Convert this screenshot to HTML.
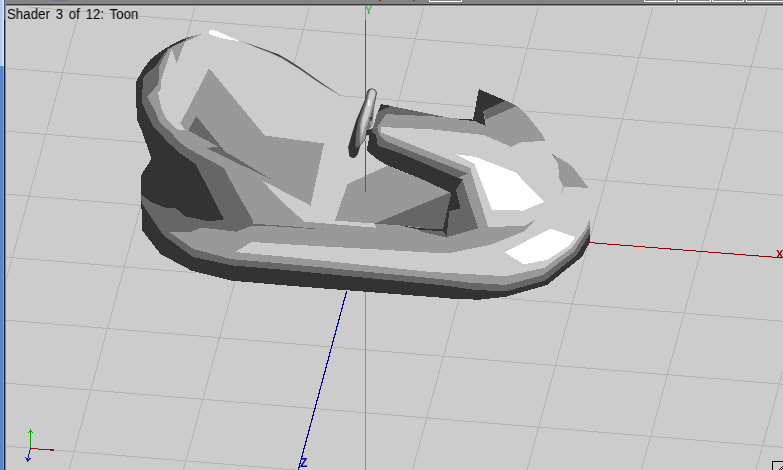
<!DOCTYPE html>
<html><head><meta charset="utf-8"><title>Shader view</title>
<style>
html,body{margin:0;padding:0;background:#cccccc;}
body{width:783px;height:470px;overflow:hidden;position:relative;font-family:"Liberation Sans",sans-serif;}
#vp{position:absolute;left:0;top:0;width:783px;height:470px;display:block}
#cap{position:absolute;left:7px;top:6px;will-change:transform;font-size:14px;line-height:16px;color:#000;white-space:pre;word-spacing:2.15px;transform:scaleX(0.95);transform-origin:0 0}
.ax{position:absolute;will-change:transform;font-size:11px;line-height:10px;font-weight:bold}
</style></head><body>
<svg id="vp" width="783" height="470" viewBox="0 0 783 470">
<rect x="0" y="0" width="783" height="470" fill="#cccccc"/>
<g shape-rendering="crispEdges">
<line x1="5.0" y1="-58.0" x2="783.0" y2="6.3" stroke="#b4b4b4" stroke-width="1" />
<line x1="5.0" y1="5.0" x2="783.0" y2="69.3" stroke="#b4b4b4" stroke-width="1" />
<line x1="5.0" y1="68.0" x2="783.0" y2="132.3" stroke="#b4b4b4" stroke-width="1" />
<line x1="5.0" y1="131.0" x2="783.0" y2="195.3" stroke="#b4b4b4" stroke-width="1" />
<line x1="5.0" y1="194.0" x2="783.0" y2="258.3" stroke="#b4b4b4" stroke-width="1" />
<line x1="5.0" y1="257.0" x2="783.0" y2="321.3" stroke="#b4b4b4" stroke-width="1" />
<line x1="5.0" y1="320.0" x2="783.0" y2="384.3" stroke="#b4b4b4" stroke-width="1" />
<line x1="5.0" y1="383.0" x2="783.0" y2="447.3" stroke="#b4b4b4" stroke-width="1" />
<line x1="5.0" y1="446.0" x2="783.0" y2="510.3" stroke="#b4b4b4" stroke-width="1" />
<line x1="5.0" y1="509.0" x2="783.0" y2="573.3" stroke="#b4b4b4" stroke-width="1" />
<line x1="-33.5" y1="5.0" x2="-160.0" y2="470.0" stroke="#b4b4b4" stroke-width="1" />
<line x1="81.0" y1="5.0" x2="-45.5" y2="470.0" stroke="#b4b4b4" stroke-width="1" />
<line x1="195.5" y1="5.0" x2="69.0" y2="470.0" stroke="#b4b4b4" stroke-width="1" />
<line x1="310.0" y1="5.0" x2="183.5" y2="470.0" stroke="#b4b4b4" stroke-width="1" />
<line x1="424.5" y1="5.0" x2="298.0" y2="470.0" stroke="#b4b4b4" stroke-width="1" />
<line x1="539.0" y1="5.0" x2="412.5" y2="470.0" stroke="#b4b4b4" stroke-width="1" />
<line x1="653.5" y1="5.0" x2="527.0" y2="470.0" stroke="#b4b4b4" stroke-width="1" />
<line x1="768.0" y1="5.0" x2="641.5" y2="470.0" stroke="#b4b4b4" stroke-width="1" />
<line x1="882.5" y1="5.0" x2="756.0" y2="470.0" stroke="#b4b4b4" stroke-width="1" />
<line x1="997.0" y1="5.0" x2="870.5" y2="470.0" stroke="#b4b4b4" stroke-width="1" />
</g>
<g shape-rendering="crispEdges">
<line x1="365.5" y1="5.0" x2="365.5" y2="470.0" stroke="#909090" stroke-width="1" />
<line x1="365.5" y1="20.0" x2="365.5" y2="192.0" stroke="#009900" stroke-width="1" />
<line x1="365.5" y1="5.0" x2="365.5" y2="20.0" stroke="#55b355" stroke-width="1" />
<line x1="589.6" y1="242.6" x2="783.0" y2="257.9" stroke="#990000" stroke-width="1" />
<line x1="346.7" y1="291.0" x2="298.3" y2="470.0" stroke="#000099" stroke-width="1.2" />
</g>
<g shape-rendering="crispEdges">
<polygon points="209.4,30.2 213.2,30.2 240.0,40.4 278.4,54.5 298.8,67.3 320.0,82.6 341.3,97.8 352.0,112.0 380.7,104.2 462.0,118.8 472.3,121.0 478.8,89.1 504.9,100.4 516.8,105.8 525.5,113.4 542.9,135.1 545.1,140.6 552.2,154.1 571.1,165.0 588.5,187.8 589.6,219.0 589.6,242.6 582.0,256.7 547.2,284.9 506.0,296.8 480.0,299.6 458.2,299.3 440.0,297.6 290.0,285.8 232.2,280.7 191.3,270.5 160.6,254.1 142.3,230.6 141.2,200.0 141.2,175.2 151.5,158.8 142.3,132.3 137.2,120.0 136.4,105.5 135.7,85.0 136.4,81.2 142.8,69.7 150.4,59.5 161.9,50.5 174.7,42.9 186.2,37.8 203.4,33.3" fill="#cccccc" />
<polygon points="203.4,33.3 186.2,37.8 174.7,42.9 161.9,50.5 150.4,59.5 142.8,69.7 136.4,81.2 135.7,85.0 136.4,105.5 137.2,120.0 142.3,132.3 151.5,158.8 141.2,175.2 141.2,200.0 142.3,230.6 160.6,254.1 191.3,270.5 232.2,280.7 290.0,285.8 440.0,296.5 458.2,299.0 506.0,296.8 547.2,284.9 582.0,256.7 589.6,242.6 589.6,220.1 585.0,230.2 572.0,247.5 545.0,267.5 506.0,276.2 430.0,271.9 280.0,256.2 235.2,252.1 251.6,241.9 280.0,243.9 440.0,253.1 447.4,253.4 490.8,244.7 523.4,231.7 535.3,219.8 523.4,226.3 488.6,226.3 477.8,228.5 448.5,238.2 446.8,236.0 443.0,229.2 401.4,225.6 374.8,223.6 335.0,220.5 304.3,221.6 280.0,200.0 261.8,180.3 271.0,179.3 206.6,148.2 217.9,146.6 188.2,130.3 177.9,129.8 167.0,119.6 161.3,108.1 158.1,92.8 161.3,87.7 161.3,80.0 162.0,77.4 171.5,48.6 176.6,63.3 185.0,42.2" fill="#999999" />
<polygon points="209.2,68.2 264.8,135.6 324.0,143.4 310.6,205.6 261.8,180.3 230.0,165.0 184.9,129.8 180.4,123.4" fill="#999999" />
<polygon points="347.4,184.1 387.3,165.8 420.0,178.4 450.6,192.2 374.8,223.6 335.0,220.5" fill="#999999" />
<polygon points="381.2,104.1 445.3,117.0 472.9,120.3 478.8,89.1 504.9,100.4 516.8,105.8 525.5,113.4 542.9,135.1 545.1,140.6 519.0,142.7 511.4,147.1 484.3,135.1 430.0,129.2 381.2,127.1 381.2,132.5 455.2,162.0 471.5,168.3 488.6,226.8 446.8,241.0 420.0,236.0 420.0,178.4 388.3,165.8 376.0,158.6 366.8,150.4 370.0,132.5 373.5,126.4 376.6,114.9" fill="#999999" />
<polygon points="552.2,154.1 571.1,165.0 588.5,187.8 563.5,186.7 559.2,178.0 558.1,163.9" fill="#999999" />
<polygon points="552.2,154.1 556.0,157.0 554.5,158.0" fill="#666666" />
<polygon points="196.0,35.2 186.2,37.8 174.7,42.9 161.9,50.5 150.4,59.5 142.8,69.7 136.4,81.2 135.7,85.0 136.4,105.5 137.2,120.0 142.3,132.3 151.5,158.8 141.2,175.2 141.2,200.0 142.3,230.6 160.6,254.1 191.3,270.5 232.2,280.7 290.0,285.8 440.0,296.5 458.2,299.0 506.0,296.8 547.2,284.9 582.0,256.7 589.6,242.6 589.6,227.2 574.0,251.5 542.9,275.1 506.0,284.9 470.0,282.8 440.0,279.0 280.0,263.3 232.2,259.3 193.3,249.0 168.8,231.7 191.3,231.7 201.5,227.6 236.3,231.7 252.6,225.5 252.6,220.4 250.5,216.0 236.2,191.5 224.0,168.0 197.4,153.7 185.2,146.6 177.3,140.0 172.1,133.6 159.4,122.1 155.5,111.9 147.2,96.6 157.5,85.1 158.7,80.0 159.4,65.9 168.3,49.3 185.0,40.1" fill="#666666" />
<polygon points="196.3,116.2 188.2,130.3 217.9,146.6 206.6,148.2 271.0,179.3 233.0,156.0 226.0,152.7" fill="#666666" />
<polygon points="381.2,104.1 445.3,117.0 385.8,114.1 377.3,127.1 379.6,135.5 385.3,141.0 400.0,146.9 467.9,173.4 467.5,174.6 488.2,226.7 478.2,228.2 448.4,236.7 446.8,237.6 420.0,231.3 420.0,204.9 450.6,192.2 420.0,178.4 388.3,165.8 376.0,158.6 366.8,150.4 370.0,132.5 373.5,126.4 376.6,114.9" fill="#666666" />
<polygon points="450.6,192.2 374.8,223.6 401.4,225.6 443.0,229.2 448.4,211.4" fill="#666666" />
<polygon points="505.6,100.6 516.8,105.8 485.7,119.5 483.1,110.8" fill="#666666" />
<polygon points="467.9,173.4 471.5,168.3 488.6,226.8 478.2,228.2 462.9,181.5 458.2,178.0" fill="#999999" />
<polygon points="186.2,37.8 174.7,42.9 161.9,50.5 150.4,59.5 142.8,69.7 136.4,81.2 135.7,85.0 136.4,105.5 137.2,120.0 142.3,132.3 151.5,158.8 141.2,175.2 141.2,194.6 150.4,201.7 165.8,207.9 176.0,208.2 185.2,216.3 209.7,221.5 224.0,219.4 207.6,187.4 195.4,163.9 179.0,152.7 165.8,140.0 153.0,126.0 146.6,113.2 141.5,101.7 142.8,85.0 142.8,78.6 146.6,73.5 156.2,65.9 163.2,54.4 168.3,48.6 174.7,45.4 186.2,39.7" fill="#333333" />
<polygon points="142.3,204.0 162.7,234.7 193.3,257.2 232.2,265.4 280.0,269.5 440.0,285.0 476.0,290.0 506.0,291.4 545.0,280.6 577.0,254.8 589.6,234.3 589.6,242.6 582.0,256.7 547.2,284.9 506.0,296.8 480.0,299.6 458.2,299.3 440.0,297.6 290.0,285.8 232.2,280.7 191.3,270.5 160.6,254.1 142.3,230.6 141.2,200.0" fill="#333333" />
<polygon points="478.8,89.1 505.6,100.6 483.1,110.8 485.7,125.7 472.9,120.3" fill="#333333" />
<polygon points="458.6,118.6 472.9,119.6 472.9,120.8 458.6,119.8" fill="#333333" />
<polygon points="378.0,112.0 380.7,104.1 391.0,105.9" fill="#333333" />
<polygon points="370.0,132.5 366.8,150.4 376.0,158.6 388.3,165.8 420.0,178.4 451.4,193.0 456.0,189.9 462.9,179.2 458.2,178.0 400.0,153.0 377.7,145.6 375.8,134.0" fill="#333333" />
<polygon points="451.4,193.0 456.0,189.9 460.6,208.3 449.1,211.4 446.8,235.9 443.0,229.0 447.0,211.0" fill="#333333" />
<polygon points="420.0,228.3 443.0,229.2 446.8,235.9 443.0,231.0 420.0,230.0" fill="#333333" />
<polygon points="401.4,225.6 420.0,228.3 420.0,230.0" fill="#333333" />
<polygon points="381.2,127.1 430.0,129.2 484.3,135.1 511.4,147.1 515.8,172.6 477.5,170.0 492.0,209.8 523.4,226.3 488.2,226.7 470.6,170.0 471.5,168.3 381.2,132.5" fill="#cccccc" />
<polygon points="304.3,221.6 335.0,220.5 374.8,223.6 376.0,227.7 340.0,224.8" fill="#cccccc" />
<polygon points="251.0,223.6 275.0,225.2 303.0,227.2 303.0,228.2 275.0,226.4 251.0,225.6" fill="#666666" />
<polygon points="306.0,227.6 314.0,228.1 314.0,229.0 306.0,228.5" fill="#666666" />
<polygon points="320.0,228.5 323.0,228.7 323.0,229.6 320.0,229.4" fill="#666666" />
<polygon points="208.6,32.7 210.0,30.4 213.4,29.6 239.0,40.8 231.8,40.3 220.3,38.0 210.3,34.7" fill="#ffffff" />
<polygon points="455.2,154.3 475.6,156.9 515.8,172.6 544.0,201.9 523.4,210.6 492.0,209.8 474.5,163.9" fill="#ffffff" />
<polygon points="504.9,252.3 550.5,228.5 575.5,237.1 569.0,245.8 547.2,259.9 523.4,264.3" fill="#ffffff" />
</g>
<polygon points="247.0,43.3 264.0,49.8 278.4,55.2 290.0,62.2 300.0,68.8 320.0,82.8 342.5,97.2 320.0,83.6 300.0,69.8 290.0,63.6 282.0,58.6 270.0,53.0 256.0,47.4" fill="#8a8a8a"/>
<polygon points="239.0,40.2 256.0,46.3 278.4,54.3 290.0,61.0 300.0,67.5 320.0,81.8 342.5,96.7 320.0,82.9 300.0,69.0 290.0,62.8 282.0,57.8 270.0,52.3 256.0,46.9" fill="#383838"/>
<path d="M563.5,186.7 Q562.8,190 561,193" fill="none" stroke="#9a9a9a" stroke-width="0.8"/>
<g>
<path d="M376,99 L374.3,106 L373,119 L371.2,126.8 L367,131 L370.4,119 L373,110.5 Z" fill="#666666"/>
<path d="M370.2,121 L373.6,121.2 L373.2,125.6 L369.6,125.6 Z" fill="#999999"/>
<path d="M366.2,130.2 L372.3,128.5 L372.3,134.5 L366,135.5 Z" fill="#333333"/>
<path d="M371.7,88.4 C374.5,88.4 377,90.5 376.8,93.5 L375.5,100.3 L373,110.5 L370.4,119 L367,130 L365.5,139.6 L360.4,145.5 L357.9,154 C356.3,157 354.2,158.4 352.8,157.9 C350.5,157.3 349,156.5 349.2,155.2 L348.1,147.2 L351,137 L356.3,120 L365.7,97.8 L367,91.8 C368,89.5 369.5,88.4 371.7,88.4 Z" fill="#333333"/>
<path d="M371.7,88.9 C374.3,88.9 376.5,90.8 376.3,93.5 L375,100.3 L372.6,110.5 L370,119 L366.6,130 L365.2,139.3 L360.4,145 L357,148 L355.3,145.5 L356.2,132.8 L358.6,120 L364.9,102 L367.4,93.5 C368.3,90.5 369.8,88.9 371.7,88.9 Z" fill="#666666"/>
<path d="M371.8,89.2 C374.2,89.2 376.2,91 376,93.5 L374.7,100.3 L372.3,110.5 L369.7,119 L366.3,130 L364.9,139 L360.4,144.6 L359.6,141.3 L360,125 L361.1,119 L366.6,102 L368.5,93.5 C369.2,91 370.2,89.2 371.8,89.2 Z" fill="#999999"/>
<path d="M372,89.8 C373.8,89.8 375.4,91.3 375.2,93.5 L372.6,102 L367.6,119.5 L365.1,125.1 L361.7,137 L361.3,128.5 L362.3,119.5 L367.4,102 L369.3,94.5 C369.9,92 370.8,89.8 372,89.8 Z" fill="#cccccc"/>
<path d="M368.6,100.3 L370,100.3 L369.4,106 L368,106 Z" fill="#ffffff"/>
<path d="M369.8,117 L372,117 L371.6,119.6 L369.4,119.6 Z" fill="#333333"/>
</g>
<line x1="365.5" y1="140.5" x2="365.5" y2="192" stroke="#009900" stroke-width="1" shape-rendering="crispEdges"/>
<!-- gizmo -->
<g shape-rendering="crispEdges" fill="none" stroke-width="1">
<path d="M30.5 448.5V430M28.5 433l2-3l2 3" stroke="#00a000"/>
<path d="M30.5 448.5L52 450" stroke="#a01010"/><rect x="50" y="449" width="4" height="2" fill="#a01010" stroke="none"/>
<path d="M30.5 448.5L27.5 460M25.5 457l2 4l3-3" stroke="#1010a0"/>
</g>
<!-- frame -->
<g shape-rendering="crispEdges">
<rect x="6" y="0" width="777" height="4" fill="#848484"/>
<rect x="6" y="4" width="777" height="1" fill="#383838"/>
<rect x="6" y="5" width="777" height="1" fill="#8c8c8c"/>
<rect x="6" y="6" width="777" height="1" fill="#d2d2d2"/>
<rect x="50" y="0" width="20" height="1" fill="#6e7490"/>
<rect x="379" y="0" width="2" height="1" fill="#5a3030"/><rect x="413" y="0" width="2" height="1" fill="#505050"/>
<rect x="0" y="0" width="2" height="66" fill="#b4caec"/>
<rect x="2" y="0" width="1" height="66" fill="#c6d6f0"/>
<rect x="3" y="0" width="1" height="66" fill="#dde6f5"/>
<rect x="0" y="66" width="3" height="404" fill="#5585cc"/>
<rect x="3" y="66" width="1" height="404" fill="#86a6da"/>
<rect x="4" y="0" width="1" height="470" fill="#0d1833"/>
<rect x="5" y="0" width="1" height="470" fill="#878b95"/>
<rect x="4" y="0" width="1" height="20" fill="#4a5a7c"/>
<g fill="none" stroke="#fff" stroke-width="1">
<rect x="429.5" y="-2.5" width="32" height="4"/>
<rect x="644.5" y="-2.5" width="31" height="4"/><rect x="678.5" y="-2.5" width="32" height="4"/><rect x="712.5" y="-2.5" width="31" height="4"/><rect x="746.5" y="-2.5" width="40" height="4"/>
</g>
<rect x="772.5" y="461.5" width="12" height="10" fill="#cecece" stroke="#000" stroke-width="1"/>
<path d="M778.5 470.5L783.5 465.5M780.5 470.5L783.5 467.5M782.5 470.5L783.5 469.5" stroke="#222" stroke-width="1" fill="none"/>
</g>
</svg>
<div id="cap">Shader 3 of 12: Toon</div>
<div class="ax" style="left:365px;top:5px;color:#4fb04f">Y</div>
<div class="ax" style="left:776px;top:249px;color:#990000">X</div>
<div class="ax" style="left:300px;top:458px;color:#000099;font-size:12px">Z</div>
</body></html>
